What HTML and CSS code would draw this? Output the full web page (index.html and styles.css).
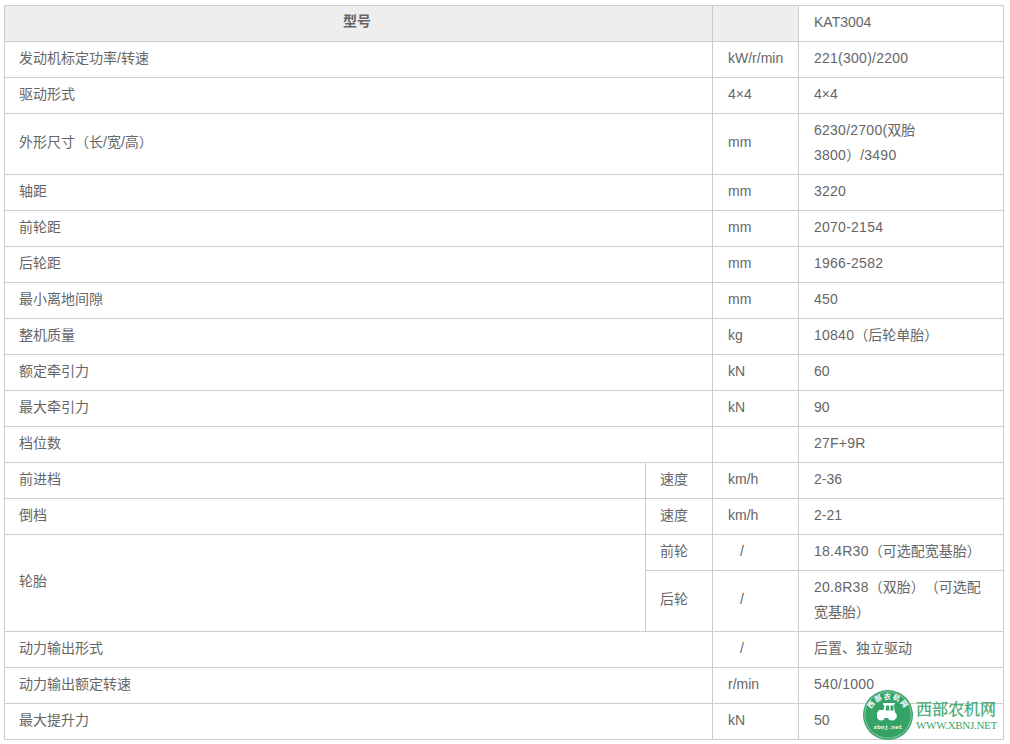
FILE: index.html
```html
<!DOCTYPE html>
<html lang="zh">
<head>
<meta charset="utf-8">
<title>KAT3004</title>
<link rel="stylesheet" href="styles.css">
</head>
<body>
<table class="spec">
<colgroup><col class="c1"><col class="c2"><col class="c3"><col class="c4"></colgroup>
<tbody>
<tr><th colspan="2">型号</th><th class="blank"></th><td>KAT3004</td></tr>
<tr><td colspan="2" class="zh">发动机标定功率/转速</td><td>kW/r/min</td><td><span class="n">221(300)/2200</span></td></tr>
<tr><td colspan="2" class="zh">驱动形式</td><td>4×4</td><td>4×4</td></tr>
<tr><td colspan="2" class="zh tall">外形尺寸（长/宽/高）</td><td class="tall">mm</td><td><span class="n">6230/2700(</span>双胎<span class="n">3800</span>）<span class="n">/3490</span></td></tr>
<tr><td colspan="2" class="zh">轴距</td><td>mm</td><td><span class="n">3220</span></td></tr>
<tr><td colspan="2" class="zh">前轮距</td><td>mm</td><td><span class="n">2070-2154</span></td></tr>
<tr><td colspan="2" class="zh">后轮距</td><td>mm</td><td><span class="n">1966-2582</span></td></tr>
<tr><td colspan="2" class="zh">最小离地间隙</td><td>mm</td><td><span class="n">450</span></td></tr>
<tr><td colspan="2" class="zh">整机质量</td><td>kg</td><td><span class="n">10840</span>（后轮单胎）</td></tr>
<tr><td colspan="2" class="zh">额定牵引力</td><td>kN</td><td>60</td></tr>
<tr><td colspan="2" class="zh">最大牵引力</td><td>kN</td><td>90</td></tr>
<tr><td colspan="2" class="zh">档位数</td><td></td><td><span class="n">27F+9R</span></td></tr>
<tr><td class="zh">前进档</td><td class="zh">速度</td><td>km/h</td><td>2-36</td></tr>
<tr><td class="zh">倒档</td><td class="zh">速度</td><td>km/h</td><td>2-21</td></tr>
<tr><td rowspan="2" class="zh tall">轮胎</td><td class="zh">前轮</td><td class="slash">/</td><td><span class="n">18.4R30</span>（可选配宽基胎）</td></tr>
<tr><td class="zh tall">后轮</td><td class="slash tall">/</td><td><span class="n">20.8R38</span>（双胎）（可选配宽基胎）</td></tr>
<tr><td colspan="2" class="zh">动力输出形式</td><td class="slash">/</td><td>后置、独立驱动</td></tr>
<tr><td colspan="2" class="zh">动力输出额定转速</td><td>r/min</td><td><span class="n">540/1000</span></td></tr>
<tr><td colspan="2" class="zh">最大提升力</td><td>kN</td><td>50</td></tr>
</tbody>
</table>
<div class="mark">
<svg class="seal" viewBox="0 0 50 50" width="50" height="50">
<defs><path id="arc" d="M6.500 27 A18.500 18.500 0 0 1 43.500 27"/></defs>
<circle cx="25" cy="25" r="25" fill="#35a267"/>
<circle cx="25" cy="25" r="23.200" fill="none" stroke="#e3f3ea" stroke-width=".5"/>
<text class="seal-top"><textPath href="#arc" startOffset="50%" text-anchor="middle">西部农机网</textPath></text>
<path fill="#fff" d="M20 13h12v1.500h-1.200l1.200 8 1.500 1.500v4H14v-5l2-3h4.500l.8-5H20z"/>
<rect x="23" y="15.500" width="3.200" height="5" fill="#35a267"/>
<rect x="27.500" y="15.500" width="3" height="5" fill="#35a267"/>
<circle cx="18" cy="27" r="3.500" fill="#fff"/>
<circle cx="29" cy="26" r="4.500" fill="#fff"/>
<text class="seal-url" x="25" y="38.500" text-anchor="middle">xbnj.net</text>
</svg>
<div class="mark-text">
<div class="mark-name">西部农机网</div>
<div class="mark-url">WWW.XBNJ.NET</div>
</div>
</div>
</body>
</html>
```
FILE: styles.css
```css
html, body { background: #fff; }
body {
  margin: 5px 6px 0 4px;
  font-family: "Liberation Sans", "Noto Sans CJK SC", sans-serif;
  font-size: 14px;
  line-height: 25px;
  color: #666;
  text-spacing-trim: space-all;
  font-feature-settings: "chws" 0;
}
.spec {
  width: 1000px;
  table-layout: fixed;
  border-collapse: separate;
  border-spacing: 0;
  border-top: 1px solid #ccc;
  border-left: 1px solid #ccc;
}
.c1 { width: 641px; }
.c2 { width: 67px; }
.c3 { width: 86px; }
.c4 { width: 205px; }
.spec th, .spec td {
  border-right: 1px solid #ccc;
  border-bottom: 1px solid #ccc;
  padding: 4px 15px 6px;
  text-align: left;
  font-weight: normal;
  vertical-align: middle;
}
.spec th { background: #eee; text-align: center; font-weight: bold; padding: 3px 18px 7px 15px; }
.spec .zh { padding-left: 14px; }
.spec .tall { padding-bottom: 8px; }
.spec .slash { padding-left: 27px; }
.n { letter-spacing: .25px; }
.mark {
  position: absolute;
  left: 863px;
  top: 690px;
  display: flex;
  align-items: center;
  gap: 3px;
}
.seal { display: block; }
.seal-top { font: bold 7px "Noto Sans CJK SC", sans-serif; fill: #fff; letter-spacing: 1.400px; }
.seal-url { font: bold 6px "Liberation Mono", monospace; fill: #fff; }
.mark-text { color: #3aa56c; font-family: "Liberation Serif", "Noto Serif CJK SC", "Noto Sans CJK SC", serif; }
.mark-name { font-size: 16px; line-height: 19px; font-weight: normal; -webkit-text-stroke: .3px #3aa56c; }
.mark-url { font-size: 11px; line-height: 12px; letter-spacing: -.3px; white-space: nowrap; }
```
